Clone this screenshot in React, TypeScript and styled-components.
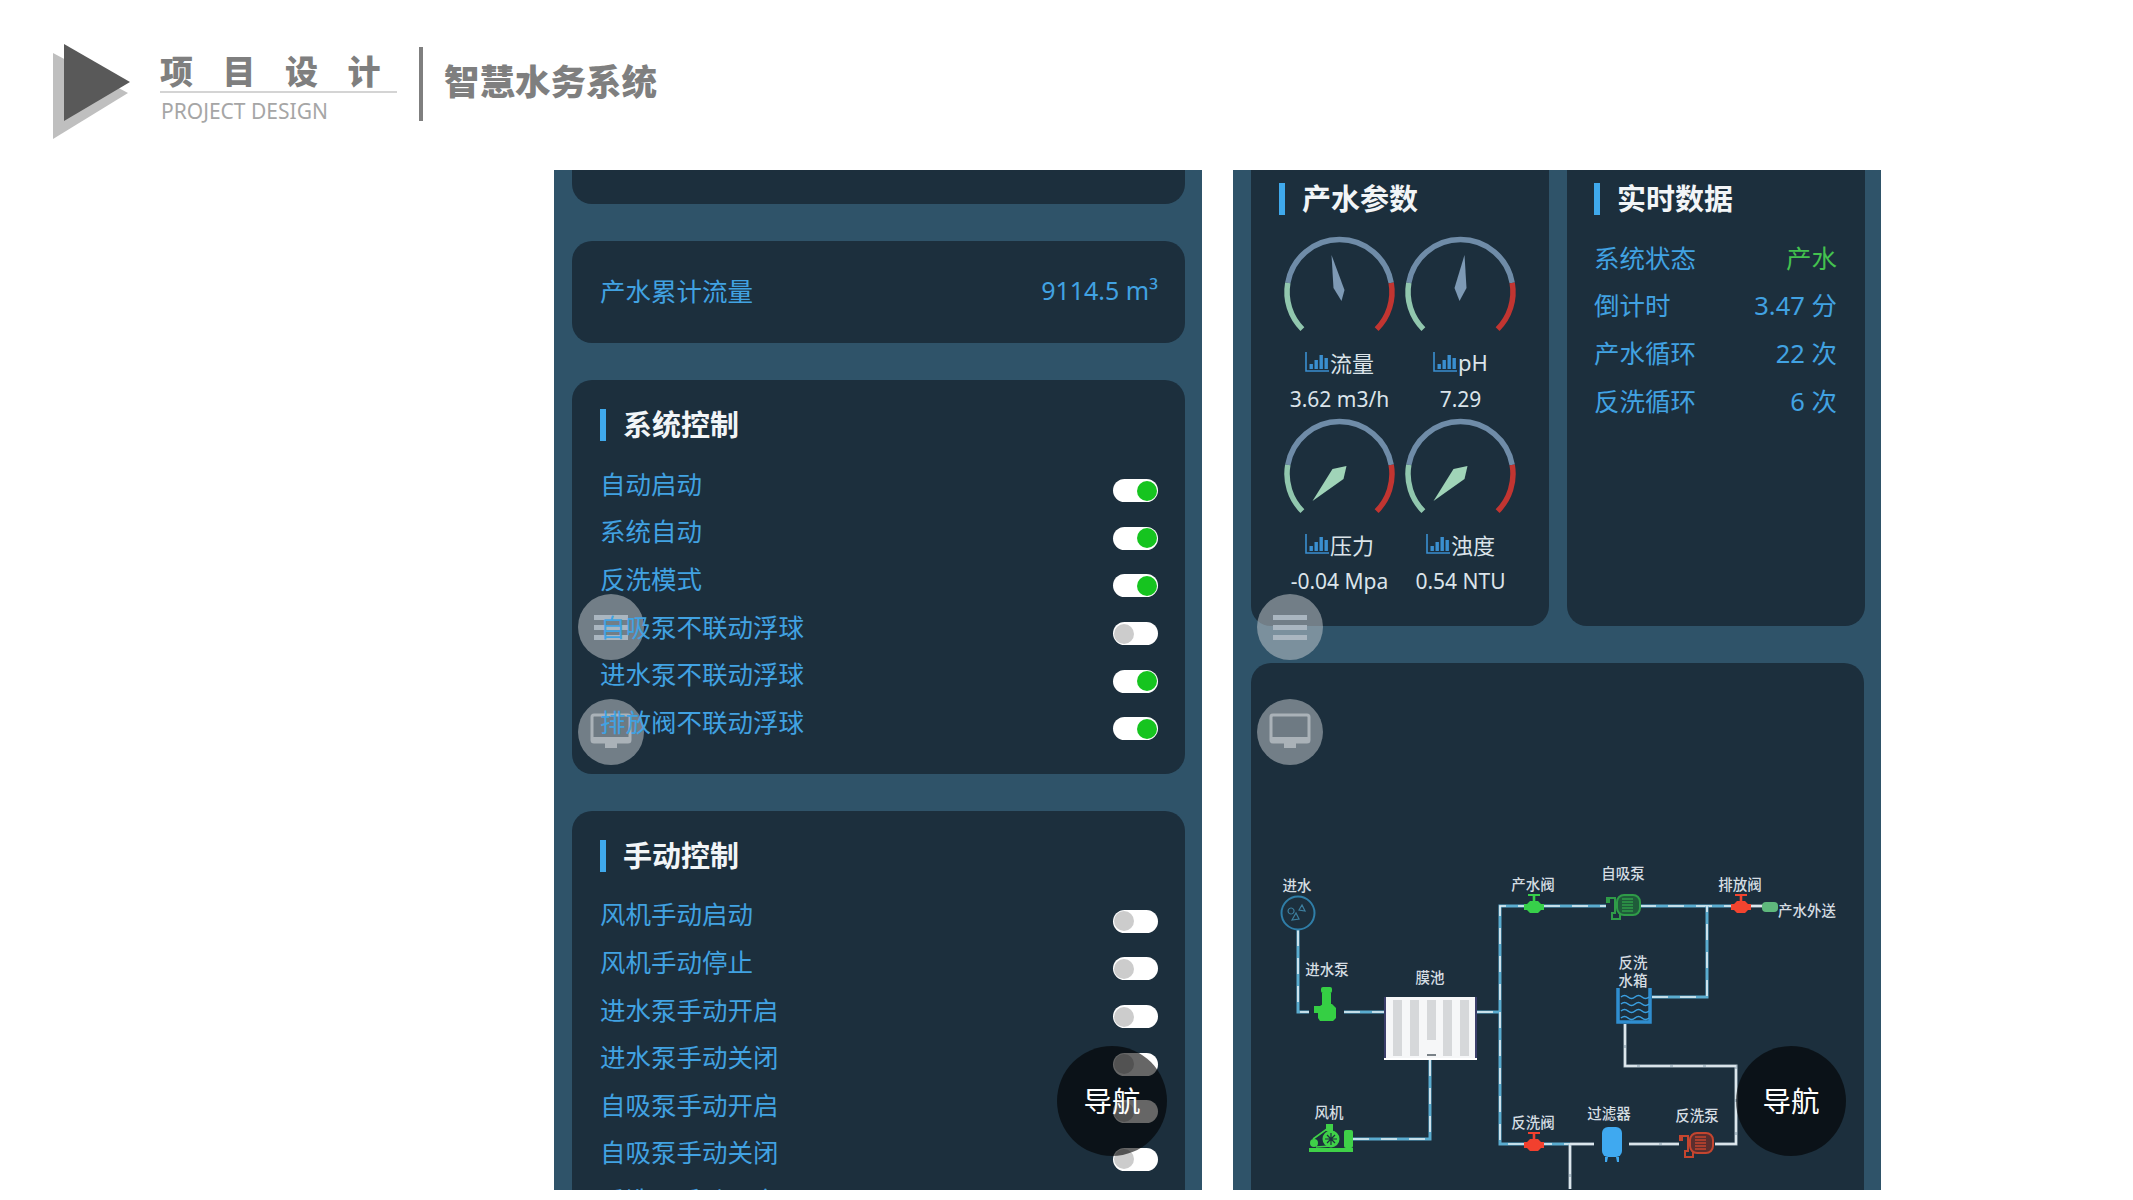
import { FC } from 'react';
import styled, { createGlobalStyle } from 'styled-components';

const GlobalStyle = createGlobalStyle`
  html, body {
    margin: 0;
    padding: 0;
    background: #fff;
  }
  body {
    font-family: 'Noto Sans', 'Noto Sans CJK SC', sans-serif;
  }
`;

const Page = styled.div`
  width: 2133px;
  height: 1200px;
  overflow: hidden;
  background: #fff;
`;

const Header = styled.header`
  display: flex;
  align-items: flex-start;
  height: 170px;
  padding-left: 53px;
  box-sizing: border-box;
`;

const Logo = styled.svg`
  flex: none;
  width: 78px;
  height: 97px;
  margin-top: 44px;
`;

const TitleBlock = styled.div`
  flex: none;
  width: 237px;
  margin: 52px 0 0 29px;
`;

const MainTitle = styled.div`
  height: 39px;
  line-height: 36px;
  font-family: 'Noto Sans CJK SC', sans-serif;
  font-size: 33px;
  font-weight: 900;
  letter-spacing: 29.5px;
  white-space: nowrap;
  color: #7f7f7f;
  border-bottom: 2px solid #d4d4d4;
`;

const SubTitle = styled.div`
  line-height: 37px;
  padding-left: 1px;
  font-family: 'Noto Sans', sans-serif;
  font-size: 21px;
  color: #a6a6a6;
  white-space: nowrap;
`;

const HeaderRule = styled.div`
  flex: none;
  width: 4px;
  height: 74px;
  margin: 47px 0 0 22px;
  background: #7f7f7f;
`;

const ProjectName = styled.div`
  margin: 58px 0 0 21px;
  line-height: 44px;
  font-family: 'Noto Sans CJK SC', sans-serif;
  font-size: 35.5px;
  font-weight: 900;
  color: #7f7f7f;
  white-space: nowrap;
`;

const Screens = styled.main`
  display: flex;
  gap: 31px;
  height: 1020px;
  padding-left: 554px;
`;

const Phone = styled.section`
  position: relative;
  flex: none;
  display: flex;
  flex-direction: column;
  gap: 37px;
  width: 648px;
  height: 1020px;
  box-sizing: border-box;
  overflow: hidden;
  padding: 0 17px 0 18px;
  background: #2f5369;
  font-family: 'Noto Sans', 'Noto Sans CJK SC', sans-serif;
`;

const Card = styled.div`
  flex: none;
  box-sizing: border-box;
  background: #1c2f3d;
  border-radius: 20px;
  padding: 25px 27px 28px 28px;
`;

const StubCard = styled(Card)`
  height: 34px;
  padding: 0;
  border-radius: 0 0 20px 20px;
`;

const TotalCard = styled(Card)`
  display: flex;
  align-items: center;
  justify-content: space-between;
  height: 102px;
  padding-top: 0;
  padding-bottom: 5px;
  color: #41a2e2;
  font-size: 25.5px;
`;

const TotalValue = styled.span`
  font-size: 25px;
`;

const SectionTitle = styled.h2`
  display: flex;
  align-items: center;
  gap: 17px;
  height: 40px;
  margin: 0 0 15px;
  font-family: 'Noto Sans CJK SC', sans-serif;
  font-size: 29px;
  font-weight: 700;
  color: #f2f5f7;

  &::before {
    content: '';
    flex: none;
    width: 6px;
    height: 32px;
    background: #3fa9ec;
  }
`;

const TitleText = styled.span`
  padding-bottom: 4px;
`;

const Row = styled.div`
  display: flex;
  align-items: center;
  justify-content: space-between;
  height: 47.6px;
  font-size: 25.5px;
  color: #41a2e2;
  white-space: nowrap;
`;

/* labels stay readable above the translucent float buttons */
const RowLabel = styled.span`
  position: relative;
  z-index: 2;
  padding-bottom: 3px;
`;

const Toggle = styled.span<{ $on: boolean }>`
  flex: none;
  display: flex;
  justify-content: ${({ $on }) => ($on ? 'flex-end' : 'flex-start')};
  align-items: center;
  box-sizing: border-box;
  width: 45px;
  height: 23px;
  margin-top: 14px;
  padding: 0 1px;
  border-radius: 12px;
  background: #fff;

  &::after {
    content: '';
    width: 20px;
    height: 20px;
    border-radius: 50%;
    background: ${({ $on }) => ($on ? '#16c41f' : '#cccccc')};
  }
`;

const FloatButton = styled.div<{ $top: number }>`
  position: absolute;
  z-index: 1;
  left: 24px;
  top: ${({ $top }) => $top}px;
  display: flex;
  align-items: center;
  justify-content: center;
  width: 66px;
  height: 66px;
  border-radius: 50%;
  background: rgba(200, 205, 210, 0.5);
`;

const NavButton = styled.div`
  position: absolute;
  z-index: 3;
  left: 503px;
  top: 876px;
  display: flex;
  align-items: center;
  justify-content: center;
  width: 110px;
  height: 110px;
  border-radius: 50%;
  background: rgba(0, 0, 0, 0.6);
  color: #fff;
  font-family: 'Noto Sans CJK SC', sans-serif;
  font-size: 28.5px;
  padding-bottom: 4px;
  box-sizing: border-box;
`;

const TopPanels = styled.div`
  flex: none;
  display: flex;
  gap: 18px;
  height: 456px;
`;

const Panel = styled(Card)`
  flex: none;
  width: 298px;
  height: 456px;
  padding: 9px 28px 0 27px;
  border-radius: 0 0 20px 20px;
`;

const GaugePanel = styled(Panel)`
  padding: 9px 0 0 28px;
`;

const GaugeGrid = styled.div`
  display: grid;
  grid-template-columns: 121px 121px;
`;

const GaugeCell = styled.div`
  display: flex;
  flex-direction: column;
  align-items: center;
  height: 182px;
`;

const GaugeDial = styled.svg`
  flex: none;
  display: block;
  width: 121px;
  height: 110px;
`;

const GaugeLabel = styled.div`
  display: flex;
  align-items: center;
  justify-content: center;
  height: 36px;
  font-size: 22px;
  color: #dbe4ea;
  white-space: nowrap;
`;

const GaugeValue = styled.div`
  height: 36px;
  line-height: 38px;
  font-size: 21px;
  color: #dbe4ea;
  white-space: nowrap;
`;

const BarIcon = styled.svg`
  flex: none;
  width: 24px;
  height: 20px;
  margin-right: 1px;
`;

const StatusValue = styled.span`
  padding-bottom: 3px;
  color: #44c24f;
`;

const RowValue = styled.span`
  padding-bottom: 3px;
`;

const DiagramCard = styled(Card)`
  height: 560px;
  padding: 0;
`;

const DiagramSvg = styled.svg`
  display: block;
  width: 614px;
  height: 526px;
`;

const NodeLabel = styled.text`
  font-family: 'Noto Sans CJK SC', sans-serif;
  font-size: 14.5px;
  font-weight: 500;
  fill: #d5dde2;
  text-anchor: middle;
  transform: translate(-1px, 1px);
`;

const systemControls: [string, boolean][] = [
  ['自动启动', true],
  ['系统自动', true],
  ['反洗模式', true],
  ['自吸泵不联动浮球', false],
  ['进水泵不联动浮球', true],
  ['排放阀不联动浮球', true],
];

const manualControls = [
  '风机手动启动',
  '风机手动停止',
  '进水泵手动开启',
  '进水泵手动关闭',
  '自吸泵手动开启',
  '自吸泵手动关闭',
  '反洗泵手动开启',
];

const realtime: [string, string][] = [
  ['倒计时', '3.47 分'],
  ['产水循环', '22 次'],
  ['反洗循环', '6 次'],
];

const polar = (deg: number, r: number) => {
  const a = (deg * Math.PI) / 180;
  return `${(60.5 + r * Math.cos(a)).toFixed(2)} ${(58 - r * Math.sin(a)).toFixed(2)}`;
};

const arc = (from: number, to: number, r = 52.5) =>
  `M${polar(from, r)} A${r} ${r} 0 ${from - to > 180 ? 1 : 0} 1 ${polar(to, r)}`;

const Gauge: FC<{ needle: string; color: string }> = ({ needle, color }) => (
  <GaugeDial viewBox="0 0 121 110">
    <path d={arc(170, 10)} fill="none" stroke="#6f8ca8" strokeWidth="5.5" />
    <path d={arc(225, 170)} fill="none" stroke="#91c7ae" strokeWidth="5.5" />
    <path d={arc(10, -45)} fill="none" stroke="#c23531" strokeWidth="5.5" />
    <polygon points={needle} fill={color} transform="translate(60.5 58)" />
  </GaugeDial>
);

const Bars: FC = () => (
  <BarIcon viewBox="0 0 24 20">
    <path d="M1 0V19H24" fill="none" stroke="#3a8fd0" strokeWidth="1.6" />
    <path
      d="M4.5 12h3.4v5H4.5zM9.5 8h3.4v9H9.5zM14.5 3h3.4v14h-3.4zM19.5 6h3.4v11h-3.4z"
      fill="#3a8fd0"
    />
  </BarIcon>
);

const gauges = [
  { label: '流量', value: '3.62 m3/h', needle: '-8,-37 -6,-4 2,9 5,-2', color: '#7e9ab5' },
  { label: 'pH', value: '7.29', needle: '4,-37 -6,-4 -1,9 6,-4', color: '#7e9ab5' },
  { label: '压力', value: '-0.04 Mpa', needle: '-27,27 -7,-5 7,-8 4,5', color: '#a0d4b8' },
  { label: '浊度', value: '0.54 NTU', needle: '-27,27 -7,-5 7,-8 4,5', color: '#a0d4b8' },
];

const MenuGlyph: FC = () => (
  <svg width="34" height="30" viewBox="0 0 34 30">
    <path d="M0 3h34v5H0zM0 13h34v5H0zM0 23h34v5H0z" fill="#aab6c0" />
  </svg>
);

const MonitorGlyph: FC = () => (
  <svg width="42" height="38" viewBox="0 0 42 38">
    <rect x="2" y="2" width="38" height="27" rx="2" fill="#6e7a83" stroke="#aab2b8" strokeWidth="3" />
    <path d="M2 24h38v5H2zM15 29h12v6H15z" fill="#aab2b8" />
  </svg>
);

const Pipe: FC<{ d: string; pale?: boolean }> = ({ d, pale }) => (
  <>
    <path d={d} fill="none" stroke={pale ? '#aebfca' : '#5aaccf'} strokeWidth="3" />
    <path
      d={d}
      fill="none"
      stroke="#e8f0f4"
      strokeWidth="1.6"
      strokeDasharray={pale ? '30 3' : '16 12'}
    />
  </>
);

const Valve: FC<{ x: number; y: number; color: string }> = ({ x, y, color }) => (
  <g transform={`translate(${x} ${y})`} fill={color}>
    <path d="M-6 -12h12v2h-12zM-1.3 -10h2.6v5h-2.6z" />
    <path d="M-10 -2h3l3 -3h8l3 3h3v6h-3l-3 3h-8l-3 -3h-3z" />
  </g>
);

const CentrifugalPump: FC<{ x: number; y: number; color: string; core: string }> = ({
  x,
  y,
  color,
  core,
}) => (
  <g transform={`translate(${x} ${y})`}>
    <rect x="0" y="-9" width="4" height="6" fill={color} />
    <path d="M4 -8h5v15h-3v6h8v-5" fill="none" stroke={color} strokeWidth="2" />
    <rect x="11" y="-11" width="23" height="20" rx="7" fill={core} stroke={color} strokeWidth="2" />
    <path d="M16 -7h11M16 -4h11M16 -1h11M16 2h11M16 5h11" stroke={color} strokeWidth="1.4" />
  </g>
);

const Fan: FC = () => (
  <g fill="#3fd148">
    <rect x="1308" y="1149" width="44" height="4" />
    <rect x="1343" y="1131" width="9" height="18" rx="2" />
    <circle cx="1330" cy="1140" r="8.5" />
    <circle cx="1313" cy="1144" r="4" />
    <rect x="1325" y="1125" width="7" height="7" />
    <path d="M1312 1140 1326 1130M1315 1148 1330 1147" stroke="#3fd148" strokeWidth="1.6" />
    <path d="M1330 1134v12M1324 1140h12M1326 1136l8 8M1334 1136l-8 8" stroke="#1c2f3d" strokeWidth="1.2" />
  </g>
);

const Diagram: FC = () => (
  <DiagramSvg viewBox="1250 664 614 526">
    <Pipe d="M1297 931V1013H1308" />
    <Pipe d="M1343 1013H1383" />
    <Pipe d="M1476 1013H1499" />
    <Pipe d="M1533 907H1499V1145H1569" />
    <Pipe d="M1543 907H1605" />
    <Pipe d="M1639 907H1730" />
    <Pipe d="M1651 998H1706V907" />
    <Pipe d="M1352 1140H1429V1061" />
    <Pipe d="M1750 907H1762" pale />
    <Pipe d="M1569 1145V1190" pale />
    <Pipe d="M1569 1145H1593" pale />
    <Pipe d="M1628 1145H1678" pale />
    <Pipe d="M1714 1145H1735V1067H1624V1025" pale />

    <NodeLabel x="1297" y="891">进水</NodeLabel>
    <circle cx="1297" cy="914" r="16.5" fill="none" stroke="#2f7ea8" strokeWidth="2" />
    <path
      d="M1291 921l4 -7 3 6zM1298 911l3 -5 3 6zM1290 915a3 3 0 1 1 .1 0"
      fill="none"
      stroke="#3d7f9f"
      strokeWidth="1.2"
    />

    <NodeLabel x="1327" y="975">进水泵</NodeLabel>
    <g fill="#35cf44">
      <rect x="1320" y="988" width="11" height="6" rx="2" />
      <rect x="1321" y="994" width="9" height="15" />
      <path d="M1313 1007h6l3 -2h9l4 4v10l-3 3h-13l-2 -3v-5h-4z" />
    </g>

    <NodeLabel x="1430" y="983">膜池</NodeLabel>
    <rect x="1383" y="998" width="93" height="63" fill="#3b3f6b" />
    <rect x="1385" y="998" width="89" height="63" fill="#f6f7f8" />
    <g fill="#d6d8da">
      <rect x="1392" y="1001" width="9" height="56" />
      <rect x="1409" y="1001" width="9" height="56" />
      <rect x="1426" y="1001" width="9" height="40" />
      <rect x="1442" y="1001" width="9" height="56" />
      <rect x="1459" y="1001" width="9" height="56" />
    </g>
    <rect x="1383" y="1059" width="93" height="2" fill="#fff" />
    <rect x="1426" y="1055" width="9" height="2" fill="#7a8288" />

    <NodeLabel x="1533" y="890">产水阀</NodeLabel>
    <Valve x={1533} y={907} color="#37d04a" />
    <NodeLabel x="1623" y="879">自吸泵</NodeLabel>
    <CentrifugalPump x={1605} y={907} color="#2f9c48" core="#1f5c3a" />
    <NodeLabel x="1740" y="890">排放阀</NodeLabel>
    <Valve x={1740} y={907} color="#f2442f" />
    <rect x="1761" y="903" width="16" height="10" rx="4" fill="#5fb87c" />
    <NodeLabel x="1807" y="916">产水外送</NodeLabel>

    <NodeLabel x="1633" y="968">反洗</NodeLabel>
    <NodeLabel x="1633" y="986">水箱</NodeLabel>
    <path d="M1617 989V1023H1649V989" fill="none" stroke="#2f8ed0" strokeWidth="3.5" />
    <path
      d="M1620 998q3.5 -3 7 0t7 0 7 0 7 0M1620 1005q3.5 -3 7 0t7 0 7 0 7 0M1620 1012q3.5 -3 7 0t7 0 7 0 7 0M1620 1019q3.5 -3 7 0t7 0 7 0 7 0"
      fill="none"
      stroke="#3a9fe0"
      strokeWidth="1.6"
    />

    <NodeLabel x="1329" y="1118">风机</NodeLabel>
    <Fan />

    <NodeLabel x="1533" y="1128">反洗阀</NodeLabel>
    <Valve x={1533} y={1145} color="#f2402e" />

    <NodeLabel x="1609" y="1119">过滤器</NodeLabel>
    <g fill="#3fa9f0">
      <rect x="1601" y="1128" width="20" height="30" rx="6" />
      <path d="M1604 1158h3l-1 5h-2zM1615 1158h3v5h-2z" />
    </g>

    <NodeLabel x="1697" y="1121">反洗泵</NodeLabel>
    <CentrifugalPump x={1678} y={1145} color="#c4452f" core="#5a2e2e" />
  </DiagramSvg>
);

const App: FC = () => {
  return (
    <Page>
      <GlobalStyle />
      <Header>
        <Logo viewBox="53 44 78 97">
          <polygon points="53,53 128,93 53,139" fill="#bfbfbf" />
          <polygon points="64,44 130,82 64,121" fill="#595959" />
        </Logo>
        <TitleBlock>
          <MainTitle>项目设计</MainTitle>
          <SubTitle>PROJECT DESIGN</SubTitle>
        </TitleBlock>
        <HeaderRule />
        <ProjectName>智慧水务系统</ProjectName>
      </Header>
      <Screens>
        <Phone>
          <StubCard />
          <TotalCard>
            <span>产水累计流量</span>
            <TotalValue>9114.5 m³</TotalValue>
          </TotalCard>
          <Card>
            <SectionTitle>
              <TitleText>系统控制</TitleText>
            </SectionTitle>
            {systemControls.map(([label, on]) => (
              <Row key={label}>
                <RowLabel>{label}</RowLabel>
                <Toggle $on={on} />
              </Row>
            ))}
          </Card>
          <Card>
            <SectionTitle>
              <TitleText>手动控制</TitleText>
            </SectionTitle>
            {manualControls.map((label) => (
              <Row key={label}>
                <RowLabel>{label}</RowLabel>
                <Toggle $on={false} />
              </Row>
            ))}
          </Card>
          <FloatButton $top={424}>
            <MenuGlyph />
          </FloatButton>
          <FloatButton $top={529}>
            <MonitorGlyph />
          </FloatButton>
          <NavButton>导航</NavButton>
        </Phone>
        <Phone>
          <TopPanels>
            <GaugePanel>
              <SectionTitle>
                <TitleText>产水参数</TitleText>
              </SectionTitle>
              <GaugeGrid>
                {gauges.map((g) => (
                  <GaugeCell key={g.label}>
                    <Gauge needle={g.needle} color={g.color} />
                    <GaugeLabel>
                      <Bars />
                      {g.label}
                    </GaugeLabel>
                    <GaugeValue>{g.value}</GaugeValue>
                  </GaugeCell>
                ))}
              </GaugeGrid>
            </GaugePanel>
            <Panel>
              <SectionTitle>
                <TitleText>实时数据</TitleText>
              </SectionTitle>
              <Row>
                <RowLabel>系统状态</RowLabel>
                <StatusValue>产水</StatusValue>
              </Row>
              {realtime.map(([label, value]) => (
                <Row key={label}>
                  <RowLabel>{label}</RowLabel>
                  <RowValue>{value}</RowValue>
                </Row>
              ))}
            </Panel>
          </TopPanels>
          <DiagramCard>
            <Diagram />
          </DiagramCard>
          <FloatButton $top={424}>
            <MenuGlyph />
          </FloatButton>
          <FloatButton $top={529}>
            <MonitorGlyph />
          </FloatButton>
          <NavButton>导航</NavButton>
        </Phone>
      </Screens>
    </Page>
  );
};

export default App;
